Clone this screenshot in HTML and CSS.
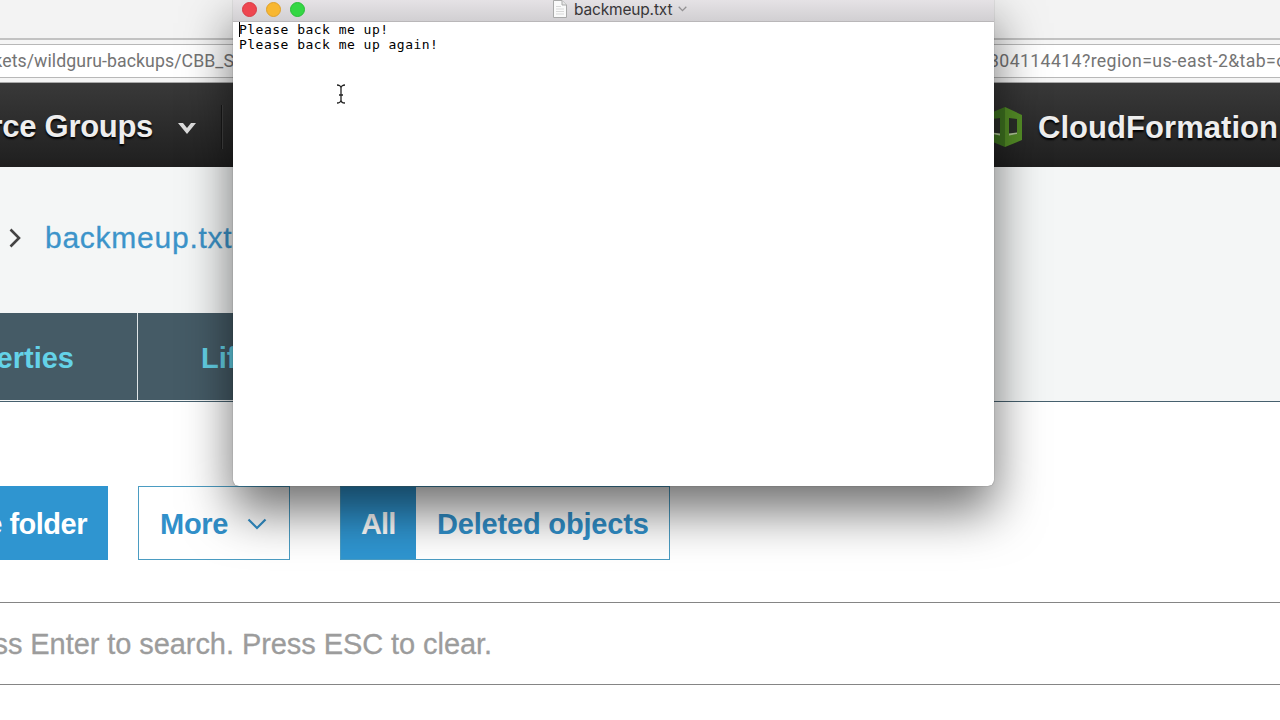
FILE: index.html
```html
<!DOCTYPE html>
<html lang="en">
<head>
<meta charset="utf-8">
<title>backmeup.txt</title>
<link rel="stylesheet" href="styles.css">
</head>
<body>
<div class="screen">
  <div class="browser-top"></div>
  <div class="address-bar">
    <div class="address-field">
      <span class="url-start">ckets/wildguru-backups/CBB_S</span>
      <span class="url-end">304114414?region=us-east-2&amp;tab=o</span>
    </div>
  </div>
  <nav class="aws-nav">
    <div class="nav-left"><span class="nav-text groups">rce Groups</span></div>
    <svg class="nav-caret" width="18" height="12" viewBox="0 0 18 12"><path d="M0 0H5L9 5L13 0H18L9 11Z" fill="#ddd"/></svg>
    <span class="nav-divider"></span>
    <div class="nav-right">
      <svg class="cf-logo" width="34" height="42" viewBox="0 0 34 42">
        <path d="M0 8L17 1V41L0 34Z" fill="#3f7420"/>
        <path d="M17 1L34 9V34L17 41Z" fill="#558f27"/>
        <path d="M21 12L29 13V28L21 29Z" fill="#2b2f29"/>
        <path d="M4 13L12 12V29L4 28Z" fill="#2b2f29"/>
        <path d="M21 27.5L29 26.5V28L21 29.5ZM4 26.5L12 27.5V29.5L4 28Z" fill="#b1c896"/>
      </svg>
      <span class="nav-text cloud">CloudFormation</span>
    </div>
  </nav>
  <header class="crumbs">
    <svg class="crumb-arrow" width="12" height="20" viewBox="0 0 12 20"><path d="M1.5 1.5L10 10L1.5 18.5" fill="none" stroke="#444" stroke-width="2.6"/></svg>
    <span class="crumb-name">backmeup.txt</span>
  </header>
  <div class="tabs">
    <div class="tab tab-first"><span class="tab-text properties">erties</span></div>
    <div class="tab tab-second"><span class="tab-text">Lifecycle</span></div>
  </div>
  <main class="content">
    <div class="actions">
      <div class="btn btn-folder"><span class="folder-text">e folder</span></div>
      <div class="btn btn-more"><span class="more-text">More</span><svg width="20" height="12" viewBox="0 0 20 12"><path d="M1.5 1.5L10 10L18.5 1.5" fill="none" stroke="#3190ca" stroke-width="2.2"/></svg></div>
      <div class="btn-group">
        <div class="seg seg-all"><span class="all-text">All</span></div>
        <div class="seg seg-deleted"><span class="deleted-text">Deleted objects</span></div>
      </div>
    </div>
    <div class="search"><span class="search-text">ss Enter to search. Press ESC to clear.</span></div>
  </main>

  <section class="window">
    <div class="titlebar">
      <span class="light red"></span><span class="light yellow"></span><span class="light green"></span>
      <svg class="doc" width="14" height="18" viewBox="0 0 14 18"><path d="M.5 .5H9L13.5 5V17.5H.5Z" fill="#fafafa" stroke="#aaa"/><path d="M9 .5V5H13.5" fill="#e6e6e6" stroke="#aaa"/><path d="M3 6.5H8M3 9H11M3 11.5H11M3 14H11" stroke="#d8d8d8"/></svg>
      <span class="title">backmeup.txt</span>
      <svg class="title-caret" width="9" height="6" viewBox="0 0 9 6"><path d="M.7 .8L4.5 4.6L8.3 .8" fill="none" stroke="#929092" stroke-width="1.3"/></svg>
    </div>
    <div class="editor"><span>Please back me up!</span><span>Please back me up again!</span></div>
    <span class="caret"></span>
    <svg class="ibeam" width="10" height="20" viewBox="0 0 10 20"><path d="M1 1C3 1 5 2 5 4C5 2 7 1 9 1M5 4V16M1 19C3 19 5 18 5 16C5 18 7 19 9 19M3 11H7" fill="none" stroke="#222" stroke-width="1.3"/></svg>
  </section>
</div>
</body>
</html>
```
FILE: styles.css
```css
* { box-sizing: border-box; }
body { margin: 0; }
.screen { position: relative; width: 1280px; height: 720px; overflow: hidden; background: #fff; font-family: "Liberation Sans", Arial, sans-serif; display: flex; flex-direction: column; white-space: nowrap; }
.screen svg, .light { flex-shrink: 0; }
.browser-top { height: 38px; background: #f3f3f3; flex-shrink: 0; }
.address-bar { height: 45px; padding: 4px 0; background: #f5f5f5; border-top: 2px solid #c2c2c2; border-bottom: 1px solid #aaa; flex-shrink: 0; }
.address-field { height: 34px; background: #fff; border-top: 1px solid #b8b8b8; border-bottom: 1px solid #b8b8b8; display: flex; align-items: center; color: #747474; font-family: Roboto, sans-serif; font-size: 17.7px; }
.url-start { width: 234px; display: flex; justify-content: flex-end; letter-spacing: .08px; }
.url-end { margin-left: 755px; letter-spacing: .38px; }
.aws-nav { height: 84px; background: linear-gradient(#393939, #1f1f1f); display: flex; align-items: center; flex-shrink: 0; padding-top: 4px; }
.nav-left { width: 153px; display: flex; justify-content: flex-end; }
.nav-text { color: #eee; font-size: 31px; line-height: 34px; font-weight: bold; text-shadow: 0 2px 2px #000; }
.groups { letter-spacing: -.3px; }
.nav-caret { margin: 3px 0 0 25px; }
.nav-divider { width: 2px; height: 44px; margin-left: 25px; background: #181818; border-right: 1px solid #414141; }
.nav-right { margin-left: 765px; display: flex; align-items: center; gap: 16px; }
.cloud { letter-spacing: .05px; padding-top: 1px; }
.crumbs { height: 146px; background: #f4f6f6; display: flex; align-items: center; padding: 0 0 4px 9px; flex-shrink: 0; }
.crumb-name { margin-left: 24px; font-size: 30px; letter-spacing: .75px; color: #3c94ca; -webkit-text-stroke: .3px #3c94ca; }
.tabs { height: 89px; background: #f4f6f6; border-bottom: 1px solid #46606e; display: flex; flex-shrink: 0; }
.tab { height: 87px; background: #455b66; display: flex; align-items: center; color: #64d2e8; font-size: 29px; font-weight: bold; padding-top: 3px; }
.tab-first { width: 138px; border-right: 1px solid #dfe5e7; }
.properties { width: 74px; display: flex; justify-content: flex-end; }
.tab-second { width: 280px; padding-left: 63px; }
.content { display: flex; flex-direction: column; }
.actions { margin-top: 84px; height: 74px; display: flex; }
.btn { height: 74px; display: flex; align-items: center; font-size: 29px; font-weight: bold; padding-top: 2px; letter-spacing: -.28px; }
.btn-folder { width: 108px; background: #2f95d0; color: #fff; letter-spacing: -.5px; }
.folder-text { width: 87px; display: flex; justify-content: flex-end; white-space: pre; }
.btn-more { width: 152px; margin-left: 30px; border: 1px solid #4b9cc2; color: #3190ca; padding-left: 21px; gap: 19px; }
.btn-group { display: flex; margin-left: 50px; width: 330px; border: 1px solid #4b9cc2; font-size: 29px; font-weight: bold; }
.seg { display: flex; align-items: center; padding-top: 2px; }
.seg-all { width: 75px; background: #2f95d0; color: #fff; padding-left: 20px; letter-spacing: -.9px; }
.seg-deleted { color: #3190ca; padding-left: 21px; letter-spacing: -.18px; }
.search { margin-top: 42px; height: 83px; border-top: 1px solid #858585; border-bottom: 1px solid #858585; display: flex; align-items: center; padding-top: 1px; color: #9c9c9c; font-size: 29px; letter-spacing: -.07px; -webkit-text-stroke: .3px #9c9c9c; }
.search-text { width: 492px; display: flex; justify-content: flex-end; }
.window { position: absolute; left: 233px; top: -2px; width: 761px; height: 488px; background: #fff; border-radius: 0 0 6px 6px; box-shadow: 0 0 1px rgba(0,0,0,.6), 0 25px 50px rgba(0,0,0,.57); }
.titlebar { height: 24px; background: linear-gradient(#e7e4e7, #d1cfd2); border-bottom: 1px solid #b9b7b9; display: flex; align-items: center; padding: 0 0 1px 9px; }
.light { width: 15px; height: 15px; border-radius: 50%; margin-right: 9px; }
.red { background: #ee4650; border: 1px solid #d83b45; }
.yellow { background: #f8b731; border: 1px solid #dfa02a; }
.green { background: #34d744; border: 1px solid #28be37; }
.doc { margin-left: 239px; }
.title { margin-left: 7px; width: 98px; font: 15.5px Inter, sans-serif; letter-spacing: -.17px; color: #383638; }
.title-caret { margin-left: 6px; }
.editor { padding: 0 0 0 6px; display: flex; flex-direction: column; font: 13px/15px "DejaVu Sans Mono", monospace; color: #000; letter-spacing: .48px; }
.caret { position: absolute; left: 6px; top: 24px; width: 1px; height: 15px; background: #000; }
.ibeam { position: absolute; left: 103px; top: 86px; }
```
